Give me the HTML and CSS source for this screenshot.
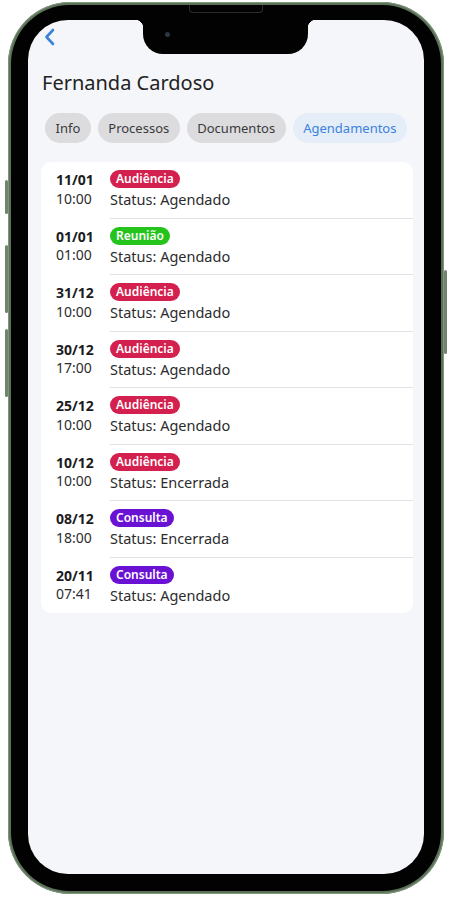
FILE: index.html
```html
<!DOCTYPE html>
<html lang="pt-BR">
<head>
  <meta charset="UTF-8">
  <meta name="viewport" content="width=device-width, initial-scale=1.0">
  <title>Agendamentos - Fernanda Cardoso</title>
  <link rel="stylesheet" href="styles.css">
</head>
<body>
  <div class="phone">
    <span class="btn-side btn-silent"></span>
    <span class="btn-side btn-vol-up"></span>
    <span class="btn-side btn-vol-down"></span>
    <span class="btn-side btn-power"></span>
    <div class="bezel">
      <span class="speaker"></span>
      <div class="screen">
        <div class="notch"><span class="camera"></span></div>

        <div class="topbar">
          <svg class="back" width="12" height="18" viewBox="0 0 12 18">
            <path d="M9 2 L2.5 9 L9 16" fill="none" stroke="#3a82dc" stroke-width="2.6" stroke-linecap="round" stroke-linejoin="round"/>
          </svg>
        </div>

        <h1 class="title">Fernanda Cardoso</h1>

        <div class="tabs">
          <span class="tab">Info</span>
          <span class="tab">Processos</span>
          <span class="tab">Documentos</span>
          <span class="tab active">Agendamentos</span>
        </div>

        <div class="card">
          <div class="row">
            <div class="when"><b>11/01</b><span>10:00</span></div>
            <div class="info"><span class="badge audiencia">Audiência</span><p>Status: Agendado</p></div>
          </div>
          <div class="row">
            <div class="when"><b>01/01</b><span>01:00</span></div>
            <div class="info"><span class="badge reuniao">Reunião</span><p>Status: Agendado</p></div>
          </div>
          <div class="row">
            <div class="when"><b>31/12</b><span>10:00</span></div>
            <div class="info"><span class="badge audiencia">Audiência</span><p>Status: Agendado</p></div>
          </div>
          <div class="row">
            <div class="when"><b>30/12</b><span>17:00</span></div>
            <div class="info"><span class="badge audiencia">Audiência</span><p>Status: Agendado</p></div>
          </div>
          <div class="row">
            <div class="when"><b>25/12</b><span>10:00</span></div>
            <div class="info"><span class="badge audiencia">Audiência</span><p>Status: Agendado</p></div>
          </div>
          <div class="row">
            <div class="when"><b>10/12</b><span>10:00</span></div>
            <div class="info"><span class="badge audiencia">Audiência</span><p>Status: Encerrada</p></div>
          </div>
          <div class="row">
            <div class="when"><b>08/12</b><span>18:00</span></div>
            <div class="info"><span class="badge consulta">Consulta</span><p>Status: Encerrada</p></div>
          </div>
          <div class="row">
            <div class="when"><b>20/11</b><span>07:41</span></div>
            <div class="info"><span class="badge consulta">Consulta</span><p>Status: Agendado</p></div>
          </div>
        </div>
      </div>
    </div>
  </div>
</body>
</html>
```

FILE: styles.css
```css
* {
  margin: 0;
  padding: 0;
  box-sizing: border-box;
  font-family: "Noto Sans", "Open Sans", sans-serif;
}
body {
  background: #ffffff;
  padding: 2px 8px 0 8px;
}

/* phone frame */
.phone {
  position: relative;
  width: 436px;
  height: 892px;
  border-radius: 62px;
  background: #5b7158;
  padding: 3px;
  box-shadow: inset 0 0 0 1px #7f957c;
}
.bezel {
  position: relative;
  height: 100%;
  border-radius: 59px;
  background: #020202;
  padding: 15px 17px 17px 17px;
}
.btn-side {
  position: absolute;
  width: 3px;
  background: #6f866c;
  border-radius: 2px;
}
.btn-silent { left: -3px; top: 178px; height: 34px; }
.btn-vol-up { left: -3px; top: 243px; height: 68px; }
.btn-vol-down { left: -3px; top: 327px; height: 68px; }
.btn-power { right: -3px; top: 268px; height: 84px; }
.speaker {
  position: absolute;
  left: 178px;
  top: 0;
  width: 74px;
  height: 8px;
  border: 1px solid #2c2c2c;
  border-top: none;
  border-radius: 0 0 4px 4px;
}

/* screen */
.screen {
  position: relative;
  height: 100%;
  border-radius: 40px;
  background: #f5f6fa;
  overflow: hidden;
  padding: 8px 11px 0 13px;
}
.notch {
  position: absolute;
  left: 115px;
  top: 0;
  width: 165px;
  height: 34px;
  background: #020202;
  border-radius: 0 0 20px 20px;
}
.notch::before,
.notch::after {
  content: "";
  position: absolute;
  top: 0;
  width: 8px;
  height: 8px;
}
.notch::before {
  left: -8px;
  background: radial-gradient(circle at 0 100%, transparent 8px, #020202 8.5px);
}
.notch::after {
  right: -8px;
  background: radial-gradient(circle at 100% 100%, transparent 8px, #020202 8.5px);
}
.camera {
  position: absolute;
  left: 22px;
  top: 12px;
  width: 5px;
  height: 5px;
  border-radius: 50%;
  background: #2d3442;
}

.topbar {
  height: 18px;
  padding-left: 3px;
}
.back {
  display: block;
}
.title {
  margin-top: 24px;
  font-size: 20px;
  line-height: 26px;
  font-weight: 400;
  color: #222222;
  padding-left: 1px;
}

/* tabs */
.tabs {
  display: flex;
  gap: 7px;
  margin-top: 17px;
  padding-left: 4px;
}
.tab {
  height: 30px;
  line-height: 30px;
  padding: 0 10.5px;
  border-radius: 15px;
  background: #dcdcde;
  color: #3a3a3c;
  font-size: 13px;
}
.tab.active {
  background: #e5edf9;
  color: #3a82dc;
}

/* list card */
.card {
  margin-top: 19px;
  background: #ffffff;
  border-radius: 10px;
}
.row {
  display: flex;
}
.when {
  width: 69px;
  padding: 9px 0 0 15px;
  display: flex;
  flex-direction: column;
  font-size: 14px;
  line-height: 18.5px;
  color: #1c1c1e;
}
.when b {
  font-weight: 700;
}
.when span {
  color: #2c2c2e;
}
.info {
  flex: 1;
  display: flex;
  flex-direction: column;
  align-items: flex-start;
  padding: 8px 0;
  border-bottom: 1px solid #e3e3e6;
}
.row:last-child .info {
  border-bottom: none;
}
.info p {
  margin-top: 1px;
  font-size: 14.5px;
  line-height: 20.5px;
  color: #2c2c2e;
}
.badge {
  height: 18px;
  line-height: 18px;
  padding: 0 6px;
  border-radius: 9px;
  font-size: 12px;
  font-weight: 600;
  color: #ffffff;
}
.audiencia { background: #d3204e; }
.reuniao { background: #25c41c; }
.consulta { background: #6a12d4; }
```
